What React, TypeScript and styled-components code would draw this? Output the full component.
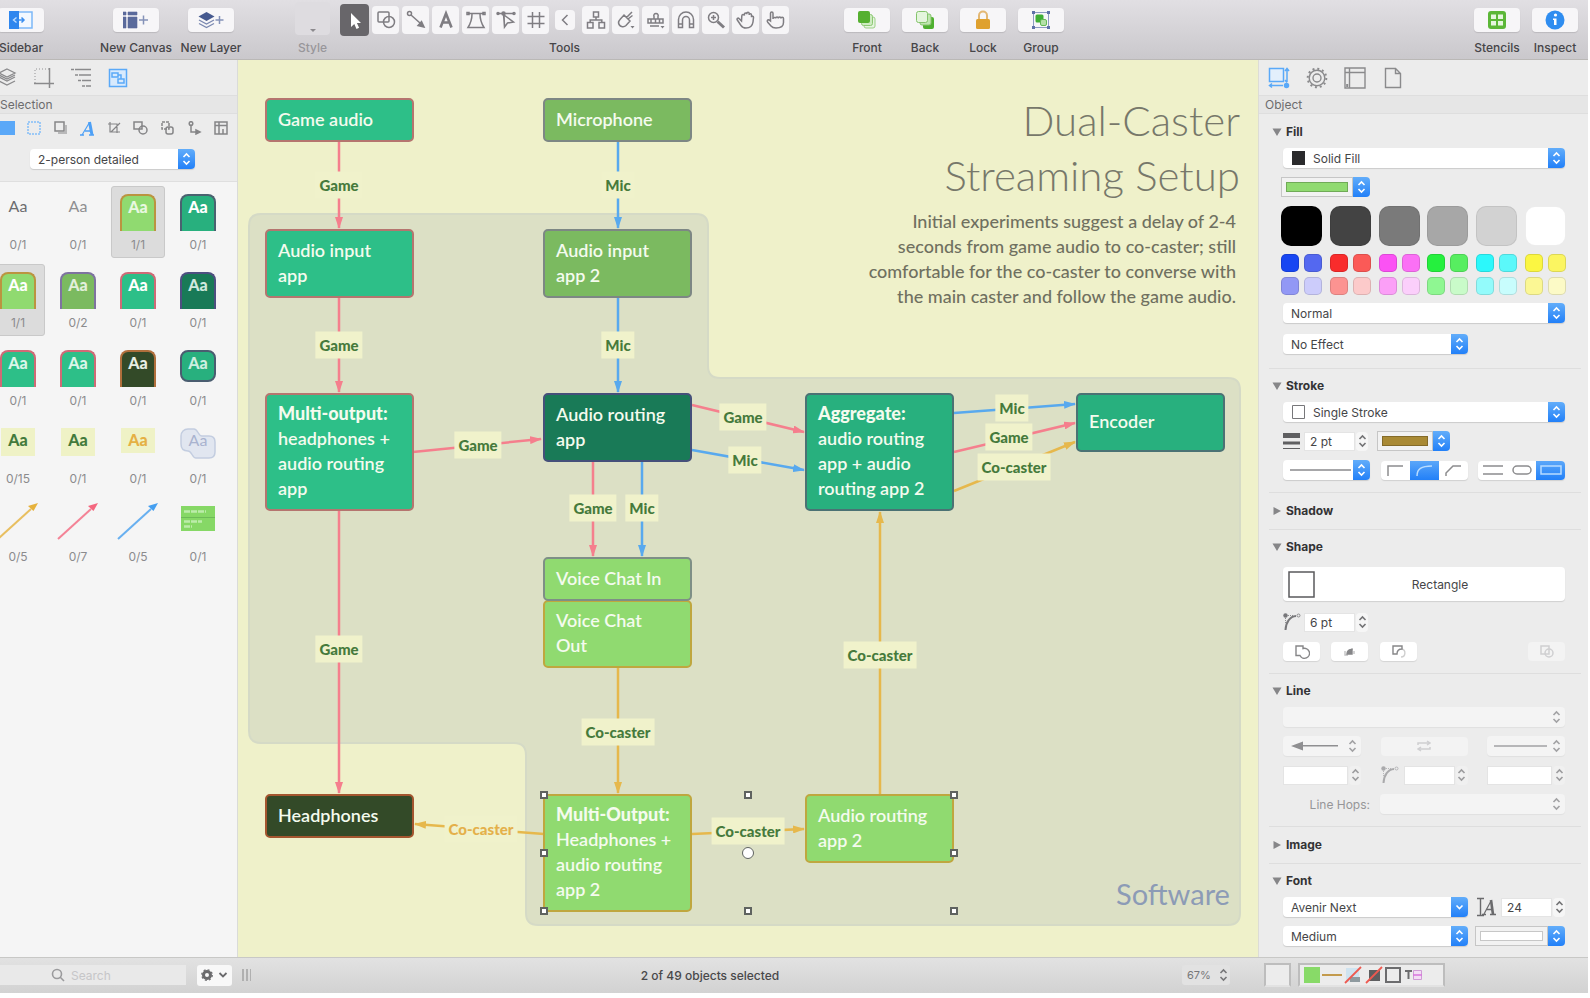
import React from "react";
import styled, { createGlobalStyle, css } from "styled-components";

const UI_FONT = `Inter, "Liberation Sans", sans-serif`;
const DOC_FONT = `Lato, "Open Sans", sans-serif`;

const GlobalStyle = createGlobalStyle`
  * { box-sizing: border-box; }
  body { margin: 0; background: #fff; font-family: ${UI_FONT}; font-size: 12px; color: #3a3a3c; }
  button, input, select { font: inherit; color: inherit; margin: 0; padding: 0; border: 0; border-radius: 0; }
  button { background: none; }
`;

/* ---------- shell ---------- */

const Shell = styled.div`
  display: grid;
  grid-template-rows: 60px minmax(0, 1fr) 36px;
  height: 100vh;
  padding: 0 2px 5px 0;
  overflow: hidden;
`;

const Workspace = styled.main`
  display: grid;
  grid-template-columns: 238px minmax(0, 1fr) 330px;
  min-height: 0;
`;

/* ---------- toolbar ---------- */

const Toolbar = styled.header`
  display: flex;
  align-items: flex-start;
  font-weight: 500;
  background: linear-gradient(#e1dfe3, #cac8cc);
  border-bottom: 1px solid #bab8b6;
  overflow: hidden;
`;

const ToolbarGroup = styled.div<{ $before?: string; $gap?: number }>`
  display: flex;
  gap: ${(p) => p.$gap ?? 12}px;
  margin-left: ${(p) => p.$before ?? "0"};
  padding-top: 8px;
`;

const ToolbarItem = styled.label`
  display: flex;
  flex-direction: column;
  align-items: center;
  width: 46px;
  gap: 8px;
  line-height: 16px;
  white-space: nowrap;
  color: #464548;
`;

const ToolbarButton = styled.button`
  display: grid;
  place-items: center;
  width: 46px;
  height: 24px;
  border-radius: 4px;
  background: #f7f6f8;
  box-shadow: 0 1px 1px rgba(0, 0, 0, 0.12);
`;

const StyleWell = styled.div`
  display: flex;
  flex-direction: column;
  align-items: center;
  width: 35px;
  margin-left: 61px;
  padding-top: 2px;
  gap: 5px;
  line-height: 16px;
  color: #98969a;
`;

const StyleButton = styled.button`
  display: flex;
  align-items: flex-end;
  justify-content: center;
  width: 35px;
  height: 33px;
  padding-bottom: 3px;
  border-radius: 4px;
  background: #dedce0;
`;

const ToolsBlock = styled.div`
  display: flex;
  flex-direction: column;
  align-items: center;
  margin-left: 10px;
  padding-top: 4px;
  gap: 4px;
  line-height: 16px;
  color: #464548;
`;

const ToolStrip = styled.div`
  display: flex;
  align-items: center;
  gap: 3px;
  height: 32px;
`;

const ToolButton = styled.button<{ $active?: boolean; $small?: boolean }>`
  display: grid;
  place-items: center;
  width: 27px;
  height: 28px;
  border-radius: 4px;
  color: #7f7d82;
  background: #f6f5f7;
  ${(p) =>
    p.$active &&
    css`
      width: 29px;
      height: 32px;
      background: #68666a;
      color: #fff;
    `}
  ${(p) =>
    p.$small &&
    css`
      width: 20px;
      height: 20px;
      margin: 0 4px 0 3px;
    `}
`;

/* ---------- side panels ---------- */

const Sidebar = styled.aside`
  display: flex;
  flex-direction: column;
  min-height: 0;
  overflow: hidden;
  background: #f5f5f5;
  border-right: 1px solid #dadbd8;
`;

const TabBar = styled.nav<{ $side: "left" | "right" }>`
  display: flex;
  align-items: center;
  flex: none;
  height: 35px;
  gap: ${(p) => (p.$side === "left" ? 15 : 16)}px;
  padding-left: ${(p) => (p.$side === "left" ? 0 : 9)}px;
  margin-left: ${(p) => (p.$side === "left" ? -4 : 0)}px;
  background: #ececec;
`;

const TabButton = styled.button<{ $active?: boolean }>`
  display: grid;
  place-items: center;
  width: 22px;
  height: 24px;
  color: ${(p) => (p.$active ? "#5aa9f8" : "#8a8a8c")};
`;

const PanelTitle = styled.h2<{ $side: "left" | "right" }>`
  flex: none;
  margin: 0;
  padding-left: ${(p) => (p.$side === "left" ? 0 : 6)}px;
  font-size: 12px;
  font-weight: 400;
  line-height: 17px;
  color: #6c6c6e;
  background: #e6e6e6;
  border-top: 1px solid #dedede;
  border-bottom: 1px solid #dedede;
`;

const FilterPane = styled.div`
  flex: none;
  display: flex;
  flex-direction: column;
  background: #ececec;
  border-bottom: 1px solid #dfdfdf;
  padding: 5px 0 12px;
  gap: 12px;
`;

const FilterRow = styled.div`
  display: flex;
  justify-content: space-between;
  width: 234px;
  margin-left: -3px;
`;

const FilterButton = styled.button`
  display: grid;
  place-items: center;
  width: 20px;
  height: 18px;
  color: #858587;
`;

const FilterSelect = styled.div`
  width: 165px;
  margin-left: 30px;
`;

const StencilGrid = styled.div`
  display: grid;
  grid-template-columns: repeat(4, 54px);
  gap: 6px;
  margin: 4px 0 0 -9px;
`;

const StencilCell = styled.button<{ $selected?: boolean }>`
  display: flex;
  flex-direction: column;
  align-items: center;
  height: 72px;
  padding-top: 7px;
  border: 1px solid ${(p) => (p.$selected ? "#c9c9c9" : "transparent")};
  border-radius: 3px;
  background: ${(p) => (p.$selected ? "#dcdcdc" : "transparent")};
`;

const StencilPreview = styled.span`
  display: flex;
  justify-content: center;
  align-items: flex-start;
  height: 43px;
`;

const StencilCount = styled.span`
  font-size: 12px;
  line-height: 16px;
  color: #8b8b8d;
`;

type ChipKind = "text" | "tab" | "round" | "note" | "shortNote";
const Chip = styled.span<{ $kind: ChipKind; $bg?: string; $edge?: string; $ink: string; $bold?: boolean }>`
  display: block;
  width: 36px;
  height: 37px;
  font-family: ${DOC_FONT};
  font-size: 16px;
  line-height: 24px;
  text-align: center;
  font-weight: ${(p) => (p.$bold ? 900 : 400)};
  color: ${(p) => p.$ink};
  background: ${(p) => p.$bg ?? "none"};
  ${(p) =>
    p.$kind === "tab" &&
    css`
      line-height: 22px;
      border: 2px solid ${p.$edge};
      border-bottom: 0;
      border-radius: 8px 8px 0 0;
    `}
  ${(p) =>
    p.$kind === "round" &&
    css`
      height: 32px;
      line-height: 22px;
      border: 2px solid ${p.$edge};
      border-radius: 8px;
    `}
  ${(p) => p.$kind === "note" && "height: 28px; width: 34px;"}
  ${(p) => p.$kind === "shortNote" && "height: 25px; width: 34px;"}
`;

const BlobChip = styled.span`
  display: grid;
  place-items: center;
  font-family: ${DOC_FONT};
  font-size: 16px;
  line-height: 24px;
  color: #a9b3cf;
  & > * { grid-area: 1 / 1; }
  & > span { align-self: start; }
`;

/* ---------- inspector ---------- */

const Inspector = styled.aside`
  display: flex;
  flex-direction: column;
  min-height: 0;
  overflow: hidden;
  background: #ececec;
  border-left: 1px solid #dcdcd6;
`;

const InspectorBody = styled.div`
  flex: 1;
  min-height: 0;
  overflow: hidden;
  padding: 1px 7px 0 10px;
`;

const Section = styled.section<{ $closed?: boolean }>`
  display: flex;
  flex-direction: column;
  gap: 9px;
  padding: ${(p) => (p.$closed ? "10px 16px 11px 14px" : "9px 16px 12px 14px")};
  border-bottom: 1px solid #dedede;
`;

const SectionToggle = styled.button`
  display: flex;
  align-items: center;
  gap: 4px;
  height: 16px;
  margin: 0 0 -1px -11px;
  font-size: 12px;
  line-height: 16px;
  font-weight: 700;
  color: #333335;
`;

const Row = styled.div<{ $between?: boolean; $tall?: boolean }>`
  display: flex;
  align-items: center;
  height: ${(p) => (p.$tall ? 24 : 20)}px;
  justify-content: ${(p) => (p.$between ? "space-between" : "flex-start")};
`;

const Field = styled.div<{ $w: number; $before?: number }>`
  display: flex;
  align-items: center;
  width: ${(p) => p.$w}px;
  margin-left: ${(p) => p.$before ?? 0}px;
`;

const PopupBox = styled.span<{ $disabled?: boolean }>`
  display: flex;
  align-items: center;
  width: 100%;
  height: 20px;
  border-radius: 4px;
  overflow: hidden;
  color: #454547;
  background: ${(p) => (p.$disabled ? "#f4f4f4" : "#fff")};
  box-shadow: 0 1px 1px rgba(0, 0, 0, ${(p) => (p.$disabled ? 0.05 : 0.14)});
  & > svg { flex: none; }
`;

const NativeSelect = styled.select<{ $bare: boolean }>`
  appearance: none;
  flex: 1;
  width: 0;
  min-width: 0;
  height: 20px;
  padding-left: ${(p) => (p.$bare ? 0 : 8)}px;
  font-size: 12px;
  background: transparent;
  opacity: 1;
`;

const PopupCap = styled.span<{ $plain?: boolean }>`
  flex: none;
  display: grid;
  place-items: center;
  width: 17px;
  height: 20px;
  color: ${(p) => (p.$plain ? "#a2a2a4" : "#fff")};
  background: ${(p) => (p.$plain ? "none" : "linear-gradient(#62adfa, #2280f8)")};
`;

const WellButton = styled.button`
  display: flex;
  align-items: center;
  width: 100%;
  height: 20px;
  border-radius: 0 4px 4px 0;
  overflow: hidden;
`;

const WellFrame = styled.span`
  flex: 1;
  display: grid;
  height: 20px;
  padding: 4px;
  border: 1px solid #c6c6c6;
  background: #f2f2f2;
`;

const WellColor = styled.span<{ $color: string }>`
  background: ${(p) => p.$color};
  border: 1px solid rgba(0, 0, 0, 0.22);
`;

const Palette = styled.div`
  display: grid;
  grid-template-columns: repeat(6, 41px);
  justify-content: space-between;
  row-gap: 8px;
  margin: 0 -1px -1px -2px;
`;

const GreySwatch = styled.button<{ $color: string }>`
  height: 40px;
  border-radius: 10px;
  background: ${(p) => p.$color};
  border: 1px solid rgba(0, 0, 0, 0.07);
`;

const ColorCluster = styled.div`
  display: grid;
  grid-template-columns: 18px 18px;
  gap: 5px;
`;

const SmallSwatch = styled.button<{ $color: string }>`
  height: 18px;
  border-radius: 5px;
  background: ${(p) => p.$color};
  border: 1px solid rgba(0, 0, 0, 0.12);
`;

const NumberInput = styled.input`
  flex: 1;
  min-width: 0;
  height: 19px;
  padding-left: 5px;
  font-size: 12px;
  background: #fff;
  color: #454547;
  border: 1px solid #e4e4e4;
`;

const StepperButton = styled.button`
  display: grid;
  place-items: center;
  width: 12px;
  height: 19px;
  margin-left: 1px;
  border-radius: 4px;
  background: #f6f6f6;
  color: #737375;
  &:disabled { color: #9c9c9e; background: #f0f0f0; }
`;

const Segments = styled.div`
  display: flex;
  width: 87px;
  height: 19px;
  border-radius: 4px;
  overflow: hidden;
  background: #fff;
  box-shadow: 0 1px 1px rgba(0, 0, 0, 0.12);
`;

const SegmentButton = styled.button<{ $active?: boolean }>`
  flex: 1;
  display: grid;
  place-items: center;
  color: ${(p) => (p.$active ? "#b8dcff" : "#8c8c8e")};
  background: ${(p) => (p.$active ? "linear-gradient(#5ba7f9, #2280f8)" : "none")};
`;

const ShapeButton = styled.button`
  display: flex;
  align-items: center;
  height: 34px;
  margin: 4px 0 2px;
  padding-left: 5px;
  border-radius: 4px;
  color: #454547;
  background: #fff;
  box-shadow: 0 1px 1px rgba(0, 0, 0, 0.12);
  & > span { flex: 1; text-align: center; }
`;

const ActionButton = styled.button<{ $before?: string; $w?: number }>`
  display: grid;
  place-items: center;
  width: ${(p) => p.$w ?? 37}px;
  height: 19px;
  margin-left: ${(p) => p.$before ?? "0"};
  border-radius: 4px;
  background: #fff;
  color: #868688;
  box-shadow: 0 1px 1px rgba(0, 0, 0, 0.1);
  &:disabled { background: #f3f3f3; color: #cfcfd1; box-shadow: none; }
`;

const HopsLabel = styled.label`
  flex: 1;
  padding-right: 10px;
  text-align: right;
  color: #969698;
`;

/* ---------- canvas ---------- */

const Canvas = styled.div`
  position: relative;
  overflow: hidden;
  background: #eff1ca;
  font-family: ${DOC_FONT};
`;

const Wiring = styled.svg`
  position: absolute;
  top: 0;
  left: 0;
`;

type Tone = "game" | "mic" | "router" | "mix" | "chat" | "voice" | "phones";
const nodeColors: Record<Tone, [string, string]> = {
  game: ["#2dbf88", "#b5756f"],
  mic: ["#7bba60", "#7d8784"],
  router: ["#197a57", "#45507a"],
  mix: ["#28b07e", "#4b7274"],
  chat: ["#90da70", "#7e8f86"],
  voice: ["#90da70", "#bfa73f"],
  phones: ["#334a28", "#a4562f"],
};

const Node = styled.div<{ $x: number; $y: number; $h: number; $tone: Tone }>`
  position: absolute;
  left: ${(p) => p.$x}px;
  top: ${(p) => p.$y}px;
  width: 149px;
  height: ${(p) => p.$h}px;
  display: flex;
  flex-direction: column;
  justify-content: center;
  padding: 0 0 2px 11px;
  border: 2px solid ${(p) => nodeColors[p.$tone][1]};
  border-radius: 5px;
  background: ${(p) => nodeColors[p.$tone][0]};
  color: #f4fbee;
  font-size: 18px;
  line-height: 25px;
  font-weight: 600;
  white-space: nowrap;
  & strong { font-weight: 900; }
`;

const EdgeLabel = styled.span<{ $x: number; $y: number; $orange?: boolean }>`
  position: absolute;
  left: ${(p) => p.$x}px;
  top: ${(p) => p.$y}px;
  transform: translate(-50%, -50%);
  padding: 0 4px 1px;
  font-size: 15px;
  line-height: 26px;
  font-weight: 900;
  white-space: nowrap;
  color: ${(p) => (p.$orange ? "#e4b04a" : "#467a3c")};
  background: #f0f2cb;
`;

const DocHeading = styled.div`
  position: absolute;
  left: 580px;
  top: 33px;
  width: 422px;
  text-align: right;
  color: #6f7060;
`;

const DocTitle = styled.h1`
  margin: 0;
  font-size: 42px;
  line-height: 55px;
  font-weight: 300;
  color: #77786a;
`;

const DocNote = styled.p`
  margin: 6px 4px 0 0;
  font-size: 18px;
  line-height: 25px;
  font-weight: 500;
`;

const RegionName = styled.span`
  position: absolute;
  left: 878px;
  top: 816px;
  font-size: 29px;
  line-height: 36px;
  color: #8c9bb6;
`;

const Handle = styled.span<{ $x: number; $y: number; $round?: boolean }>`
  position: absolute;
  left: ${(p) => p.$x}px;
  top: ${(p) => p.$y}px;
  width: ${(p) => (p.$round ? 12 : 8)}px;
  height: ${(p) => (p.$round ? 12 : 8)}px;
  transform: translate(-50%, -50%);
  border: ${(p) => (p.$round ? 1 : 2)}px solid #5f6360;
  border-radius: ${(p) => (p.$round ? "50%" : "0")};
  background: #fff;
`;

/* ---------- footer ---------- */

const Footer = styled.footer`
  display: grid;
  grid-template-columns: 238px minmax(0, 1fr) 330px;
  background: linear-gradient(#e2e2e2, #d2d2d2);
  border-top: 1px solid #c8c8c6;
`;

const FooterCell = styled.div`
  display: flex;
  align-items: center;
  height: 34px;
`;

const SearchBox = styled.label`
  display: flex;
  align-items: center;
  gap: 6px;
  width: 186px;
  height: 20px;
  padding-left: 51px;
  background: #e9e9e9;
  color: #9b9b9d;
`;

const SearchInput = styled.input`
  width: 100px;
  background: none;
  font-size: 12px;
  &::placeholder { color: #c6c6c8; opacity: 1; }
`;

const GearButton = styled.button`
  display: flex;
  align-items: center;
  justify-content: center;
  gap: 5px;
  width: 35px;
  height: 21px;
  margin-left: 11px;
  border-radius: 3px;
  background: #f8f8f8;
  color: #6a6a6c;
`;

const DragHandle = styled.span`
  width: 9px;
  height: 12px;
  margin-left: 4px;
  background: repeating-linear-gradient(90deg, #b0b0b0 0 2px, transparent 2px 4px);
`;

const StatusText = styled.span`
  flex: 1;
  padding-right: 13px;
  text-align: center;
  font-weight: 500;
  color: #48484a;
`;

const ZoomField = styled.div`
  display: flex;
  align-items: center;
  width: 48px;
  height: 20px;
  margin-right: 28px;
  padding: 0 2px 0 5px;
  border-radius: 3px;
  background: #e2e2e2;
  color: #777779;
`;

const ZoomSelect = styled.select`
  appearance: none;
  flex: 1;
  min-width: 0;
  background: none;
  font-size: 11px;
`;

const StyleTray = styled.div<{ $w: number; $before: number }>`
  display: flex;
  align-items: center;
  gap: 3px;
  width: ${(p) => p.$w}px;
  height: 24px;
  margin-left: ${(p) => p.$before}px;
  padding-left: 4px;
  border: 2px solid #bdbdbd;
  border-bottom-color: #e2e2e2;
  background: #ececec;
`;

/* ---------- icon helpers ---------- */

const Icon = ({ w = 20, h = 20, sw = 1.5, children }: { w?: number; h?: number; sw?: number; children: React.ReactNode }) => (
  <svg width={w} height={h} viewBox={`0 0 ${w} ${h}`} fill="none" stroke="currentColor" strokeWidth={sw} aria-hidden="true">
    {children}
  </svg>
);

const UpDown = () => (
  <Icon w={9} h={14} sw={1.6}>
    <path d="M1.5 5 4.5 2l3 3M1.5 9l3 3 3-3" />
  </Icon>
);

const Caret = ({ open }: { open?: boolean }) => (
  <svg width="10" height="10" viewBox="0 0 10 10" fill="#868688" aria-hidden="true">
    {open ? <path d="M.5 1.5h9L5 9z" /> : <path d="M1.5 1v8L9 5z" />}
  </svg>
);

const RadiusIcon = ({ color = "#77777a" }: { color?: string }) => (
  <svg width="18" height="18" viewBox="0 0 18 18" fill="none" stroke={color} aria-hidden="true">
    <path d="M2.500 17C3 9 7 3.500 13 3" strokeWidth="2" />
    <circle cx="2.500" cy="2.500" r="2.200" fill={color} stroke="none" />
    <path d="M2.500 5v6M5 2.500h6" strokeWidth=".8" strokeDasharray="1 1" />
    <circle cx="15.500" cy="2.500" r="1.500" strokeWidth=".8" />
  </svg>
);

/* ---------- controls ---------- */

const Popup = ({ name, value, lead, disabled, down }: { name: string; value?: string; lead?: React.ReactNode; disabled?: boolean; down?: boolean }) => (
  <PopupBox $disabled={disabled}>
    {lead}
    <NativeSelect aria-label={name} disabled={disabled} $bare={!value}>
      <option>{value ?? ""}</option>
    </NativeSelect>
    <PopupCap $plain={disabled}>
      {down ? <Icon w={9} h={14} sw={1.6}><path d="m1.500 5.500 3 3 3-3" /></Icon> : <UpDown />}
    </PopupCap>
  </PopupBox>
);

const Well = ({ name, color }: { name: string; color: string }) => (
  <WellButton aria-label={name}>
    <WellFrame><WellColor $color={color} /></WellFrame>
    <PopupCap><UpDown /></PopupCap>
  </WellButton>
);

const NumberField = ({ name, value = "", disabled }: { name: string; value?: string; disabled?: boolean }) => (
  <>
    <NumberInput aria-label={name} defaultValue={value} disabled={disabled} />
    <StepperButton aria-label={`${name} stepper`} disabled={disabled}><UpDown /></StepperButton>
  </>
);

const Heading = ({ title, open }: { title: string; open?: boolean }) => (
  <SectionToggle aria-expanded={!!open}>
    <Caret open={open} />
    {title}
  </SectionToggle>
);

/* ---------- toolbar content ---------- */

const tools: { name: string; icon: React.ReactNode; active?: boolean; small?: boolean }[] = [
  { name: "Selection", active: true, icon: <Icon><path d="M6 3v14l3.300-3 2.200 5 2.600-1.200-2.200-4.800H16z" fill="#fff" stroke="none" /></Icon> },
  { name: "Shape", icon: <Icon><rect x="2" y="2" width="11" height="10" rx="1" /><circle cx="13" cy="12" r="5.500" /></Icon> },
  { name: "Line", icon: <Icon><circle cx="3.500" cy="3.500" r="2" /><path d="m5 5 9 8" /><path d="m18 17-6-1.500 3.500-4z" fill="currentColor" /></Icon> },
  { name: "Text", icon: <Icon sw={2.6}><path d="M4.500 17.500 10 3.500l5.500 14M6.500 12.500h7" /></Icon> },
  { name: "Pen", icon: <Icon><path d="M2 3.500h16M6 4c0 6-1.500 9.500-4 13.500h16C15.500 13.500 14 10 14 4" /><rect x="1" y="2.500" width="2" height="2" /><rect x="17" y="2.500" width="2" height="2" /></Icon> },
  { name: "Point Editor", icon: <Icon><path d="M1 3.500h17M7.500 4l1 13M8 5l9.500 7-6 1-3 4z" /><circle cx="7.500" cy="3.500" r="1.500" fill="currentColor" /><circle cx="2" cy="3.500" r="1" /><circle cx="18" cy="3.500" r="1" /></Icon> },
  { name: "Artboard", icon: <Icon><path d="M6.500 2v16M13.500 2v16M1.500 6.500h17M1.500 13.500h17" /></Icon> },
  { name: "More tools", small: true, icon: <Icon w={12} h={14}><path d="M8.500 2 3.500 7l5 5" /></Icon> },
  { name: "Diagram", icon: <Icon><rect x="7.500" y="2" width="5" height="5" /><rect x="1.500" y="12.500" width="5.500" height="5.500" /><rect x="13" y="12.500" width="5.500" height="5.500" /><path d="M10 7v3M4.200 12.500V10h11.600v2.500" /></Icon> },
  { name: "Style Brush", icon: <Icon><path d="m8 5 6 6-4 4.500c-2 2-5.500 1.500-7-1-1-2 0-4 1-5zM10.500 7.500 16 2M12 9l4.500-3.500" /><path d="M14.500 16h4l-2 2.500z" fill="currentColor" stroke="none" /></Icon> },
  { name: "Rubber Stamp", icon: <Icon><path d="M8 9V6.500a2.200 2.200 0 1 1 4 0V9M2 9h15v4H2zM5 9v4M9.500 9v4M13.500 9v4M4 16h9" /><path d="M14.500 16h4l-2 2.500z" fill="currentColor" stroke="none" /></Icon> },
  { name: "Magnet", icon: <Icon><path d="M2.500 17.500V9.500a7.500 7.500 0 0 1 15 0v8h-4V10a3.500 3.500 0 0 0-7 0v7.500zM2.500 14h4M13.500 14h4" /></Icon> },
  { name: "Zoom", icon: <Icon><circle cx="7.500" cy="7.500" r="5" /><path d="M7.500 5v5M5 7.500h5" /><path d="m11.500 11.500 6.500 6" strokeWidth="3" /></Icon> },
  { name: "Hand", icon: <Icon><path d="M5.500 11 3 8.500c-1-1-2.500.3-1.700 1.500L5 15.500c1 1.500 2.500 2.500 5 2.500 4.500 0 6.500-2.500 7-6l.5-4.500c.1-1.600-1.800-1.800-2-.3V5c0-1.700-2.300-1.700-2.300 0V3.500c0-1.700-2.400-1.700-2.400 0V4.200c0-1.700-2.400-1.700-2.400 0V5.500C8 4 5.800 4.200 5.800 6z" /></Icon> },
  { name: "Browse", icon: <Icon><path d="M7 9V3.300C7 1.500 4.500 1.500 4.500 3.300V11L3 10c-1.500-.5-2.300 1-1.300 2.200L5 16c1 1.300 2.500 2 5 2 4.500 0 7.500-1.500 7.500-5.500V8.500c0-1.800-2.600-1.800-2.600 0 0-2-2.600-2-2.600 0C12.300 6.500 9.700 6.500 9.700 8.500 9.500 7 7 7 7 9z" /></Icon> },
];

const BigItem = ({ label, children }: { label: string; children: React.ReactNode }) => (
  <ToolbarItem>
    <ToolbarButton aria-label={label}>{children}</ToolbarButton>
    {label}
  </ToolbarItem>
);

const TopBar = () => (
  <Toolbar>
    <ToolbarGroup $before="-2px" $gap={29}>
      <BigItem label="Sidebar">
        <svg width="24" height="18" viewBox="0 0 24 18" fill="none" aria-hidden="true">
          <rect x="1" y="1" width="22" height="16" stroke="#7db8f7" strokeWidth="1.500" fill="#f2f8ff" />
          <path d="M0 0h10v18H0z" fill="#2f86ee" />
          <path d="M10 9h5M12.500 6.500 15 9l-2.500 2.500" stroke="#3b8ff0" strokeWidth="1.500" />
          <path d="M7.500 6.500 4.500 9l3 2.500" stroke="#bcdcff" strokeWidth="1.400" />
        </svg>
      </BigItem>
    </ToolbarGroup>
    <ToolbarGroup $before="69px" $gap={29}>
      <BigItem label="New Canvas">
        <svg width="26" height="18" viewBox="0 0 26 18" fill="none" aria-hidden="true">
          <path d="M0 1h3v3H0zM5 1h9v3H5zM0 6h3v11H0zM5 6h9v11H5z" fill="#5a6a9c" stroke="#5a6a9c" strokeWidth=".6" />
          <path d="M20.500 4.500v9M16 9h9" stroke="#8592b8" strokeWidth="1.500" />
        </svg>
      </BigItem>
      <BigItem label="New Layer">
        <svg width="26" height="18" viewBox="0 0 26 18" fill="none" aria-hidden="true">
          <path d="m8.500 1 8 4.500-8 4.500-8-4.500z" fill="#46598f" />
          <path d="m1 9 7.500 4L16 9M1 12.500l7.500 4 7.500-4" stroke="#7a88b0" strokeWidth="1.300" />
          <path d="M21.500 5v8M17.500 9h8" stroke="#8592b8" strokeWidth="1.500" />
        </svg>
      </BigItem>
    </ToolbarGroup>
    <StyleWell>
      <StyleButton aria-label="Style">
        <svg width="6" height="3" viewBox="0 0 6 3" fill="#8c8a8e" aria-hidden="true"><path d="M0 0h6L3 3z" /></svg>
      </StyleButton>
      Style
    </StyleWell>
    <ToolsBlock>
      <ToolStrip>
        {tools.map((t) => (
          <ToolButton key={t.name} aria-label={t.name} $active={t.active} $small={t.small}>{t.icon}</ToolButton>
        ))}
      </ToolStrip>
      Tools
    </ToolsBlock>
    <ToolbarGroup $before="55px">
      <BigItem label="Front">
        <svg width="20" height="20" viewBox="0 0 20 20" aria-hidden="true">
          <rect x="7" y="7" width="11" height="11" rx="2" fill="#e6f5df" stroke="#9bcf85" />
          <rect x="4.500" y="4.500" width="11" height="11" rx="2" fill="#cdebc0" stroke="#8cc873" />
          <rect x="1" y="1" width="12" height="12" rx="2" fill="#55b030" />
        </svg>
      </BigItem>
      <BigItem label="Back">
        <svg width="20" height="20" viewBox="0 0 20 20" aria-hidden="true">
          <rect x="8" y="7" width="11" height="12" rx="2" fill="#4eb02f" />
          <rect x="5" y="4" width="11" height="11" rx="2" fill="#bfe6b0" stroke="#84c46b" />
          <rect x="1.500" y="1.500" width="11" height="11" rx="2" fill="#e4f5dd" stroke="#84c46b" />
        </svg>
      </BigItem>
      <BigItem label="Lock">
        <svg width="16" height="20" viewBox="0 0 16 20" fill="none" aria-hidden="true">
          <path d="M4 10V5.500a4 4 0 0 1 8 0V10" stroke="#e3b874" strokeWidth="2" />
          <rect x="1" y="9" width="14" height="10" rx="1.500" fill="#dfa12f" />
        </svg>
      </BigItem>
      <BigItem label="Group">
        <svg width="20" height="20" viewBox="0 0 20 20" fill="none" aria-hidden="true">
          <path d="M2.500 2.500h15v15h-15z" stroke="#8d9bc2" />
          <path d="M1 1h3v3H1zM16 1h3v3h-3zM1 16h3v3H1zM16 16h3v3h-3z" fill="#5f71a8" />
          <rect x="4.500" y="4.500" width="8" height="8" rx="1.500" fill="#3fae35" />
          <rect x="9.500" y="9.500" width="6" height="6" rx="1.500" fill="#b4e0a8" stroke="#63b856" />
        </svg>
      </BigItem>
    </ToolbarGroup>
    <ToolbarGroup $before="auto">
      <BigItem label="Stencils">
        <svg width="20" height="20" viewBox="0 0 20 20" aria-hidden="true">
          <rect x="1" y="1" width="18" height="18" rx="3" fill="#5cb738" />
          <path d="M4 4.500h5V9H4zM11 4.500h5V9h-5zM4 11h5v4.500H4zM11 11h5v4.500h-5z" fill="#e6f6df" />
        </svg>
      </BigItem>
      <BigItem label="Inspect">
        <svg width="20" height="20" viewBox="0 0 20 20" aria-hidden="true">
          <circle cx="10" cy="10" r="9.500" fill="#2f8df0" />
          <circle cx="10.500" cy="5" r="1.600" fill="#fff" />
          <path d="M8 8.500h3.500V15H9V10H8z" fill="#fff" />
        </svg>
      </BigItem>
    </ToolbarGroup>
    <ToolbarGroup $before="10px" />
  </Toolbar>
);

/* ---------- left sidebar content ---------- */

const filters: { name: string; icon: React.ReactNode }[] = [
  { name: "Fill", icon: <svg width="16" height="14" viewBox="0 0 16 14" aria-hidden="true"><path d="M0 0h16v14H0z" fill="#5aa8f8" /></svg> },
  { name: "Stroke", icon: <svg width="14" height="14" viewBox="0 0 14 14" fill="none" aria-hidden="true"><path d="M1 1h12v12H1z" stroke="#83bdf8" strokeWidth="1.500" strokeDasharray="2 1" /></svg> },
  { name: "Shadow", icon: <Icon w={14} h={14}><path d="M1 1h9v9H1z" /><path d="M12 4v8H4" strokeWidth="2" opacity=".5" /></Icon> },
  { name: "Text", icon: <svg width="15" height="15" viewBox="0 0 15 15" fill="none" stroke="#4da0f6" aria-hidden="true"><path d="M2 14 9.500 1.500" strokeWidth="1.200" /><path d="M9.500 1 12 14" strokeWidth="3" /><path d="M5 10h6M0 14h4M9 14h5" strokeWidth="1.300" /></svg> },
  { name: "Crop", icon: <Icon w={14} h={14}><path d="M1 3h9v9M3 1v10h10M4 11l9-9" strokeWidth="1.200" /></Icon> },
  { name: "Shape", icon: <Icon w={15} h={14}><path d="M1 1h8v7H1z" /><circle cx="10" cy="9" r="4" /></Icon> },
  { name: "Group", icon: <Icon w={15} h={14}><path d="M2 1h7v7H2z" strokeDasharray="3 1" /><rect x="6" y="6" width="7" height="7" rx="2" /></Icon> },
  { name: "Connection", icon: <Icon w={15} h={14}><circle cx="4" cy="2.500" r="1.800" /><path d="M4 4v7h6" /><path d="M9 9l4 2-4 2z" fill="currentColor" /></Icon> },
  { name: "Grid", icon: <Icon w={14} h={14}><path d="M1 1h12v12H1zM1 4.500h12M5 1v12M9 8v5" /></Icon> },
];

const Arrow = ({ color }: { color: string }) => (
  <svg width="42" height="38" viewBox="0 4 42 38" overflow="visible" aria-hidden="true">
    <path d="M1 37 34 7" stroke={color} strokeWidth="2" opacity=".8" />
    <path d="M41 1 36.500 9 31 4z" fill={color} />
  </svg>
);

const chip = ($kind: ChipKind, $ink: string, $bg?: string, $edge?: string, $bold?: boolean) => (
  <Chip $kind={$kind} $ink={$ink} $bg={$bg} $edge={$edge} $bold={$bold}>Aa</Chip>
);

const stencils: { count: string; selected?: boolean; art: React.ReactNode }[] = [
  { count: "0/1", art: chip("text", "#6d6d6f") },
  { count: "0/1", art: chip("text", "#8f8f91") },
  { count: "1/1", selected: true, art: chip("tab", "#e9f8e0", "#90da70", "#bb9440", true) },
  { count: "0/1", art: chip("tab", "#fff", "#28b07e", "#4a6270", true) },
  { count: "1/1", selected: true, art: chip("tab", "#fff", "#90da70", "#bb9440", true) },
  { count: "0/2", art: chip("tab", "#e2efdb", "#7bba60", "#7e73a0", true) },
  { count: "0/1", art: chip("tab", "#fff", "#2dbf88", "#cf6a76", true) },
  { count: "0/1", art: chip("tab", "#cfe8dd", "#197a57", "#4d4f80", true) },
  { count: "0/1", art: chip("tab", "#daf5e9", "#2dbf88", "#cf6a76", true) },
  { count: "0/1", art: chip("tab", "#daf5e9", "#2dbf88", "#cf6a76", true) },
  { count: "0/1", art: chip("tab", "#e8ede3", "#334a28", "#b06f3c", true) },
  { count: "0/1", art: chip("round", "#cdeee0", "#28b07e", "#4a5d70", true) },
  { count: "0/15", art: chip("note", "#437a3c", "#eff2c6", undefined, true) },
  { count: "0/1", art: chip("note", "#437a3c", "#eff2c6", undefined, true) },
  { count: "0/1", art: chip("shortNote", "#e5b044", "#eff2c6", undefined, true) },
  {
    count: "0/1",
    art: (
      <BlobChip>
        <svg width="36" height="32" viewBox="0 0 36 32" aria-hidden="true">
          <path d="M8 1h6c4 0 4 7 8 7h7c4 0 6 2 6 6v10c0 4-2 6-6 6H16c-4 0-4-7-8-7-4 0-7-2-7-7V8c0-4 3-7 7-7z" fill="#e1e6f0" stroke="#c3cde0" strokeWidth="1.500" />
        </svg>
        <span>Aa</span>
      </BlobChip>
    ),
  },
  { count: "0/5", art: <Arrow color="#e6b23c" /> },
  { count: "0/7", art: <Arrow color="#f4677f" /> },
  { count: "0/5", art: <Arrow color="#459ff0" /> },
  {
    count: "0/1",
    art: (
      <svg width="36" height="34" viewBox="0 0 36 34" aria-hidden="true">
        <path d="M1 0h34v25H1z" fill="#86d866" />
        <path d="M1 11.500h34" stroke="#6dbb58" />
        <path d="M4 5.500h22M4 15.500h18M4 20.500h8" stroke="#bcecaa" strokeWidth="2.500" strokeDasharray="6 1" />
      </svg>
    ),
  },
];

const LeftPanel = () => (
  <Sidebar>
    <TabBar $side="left">
      <TabButton aria-label="Layers"><Icon w={20} h={20} sw={1.3}><path d="m10 1 8 4-8 4-8-4zM2 9l8 4 8-4M2 13l8 4 8-4M2 7l8 4 8-4" /></Icon></TabButton>
      <TabButton aria-label="Guides"><Icon w={20} h={20}><path d="M15.500 0v20M0 15.500h20" /><path d="M1 15V1h14" strokeDasharray="1 2" opacity=".6" /></Icon></TabButton>
      <TabButton aria-label="Outline"><Icon w={22} h={22}><path d="M1 2.500h20M5 8h16M8 13.500h13M12 19h9" strokeDasharray="3 1 20" /></Icon></TabButton>
      <TabButton aria-label="Selection" $active><Icon w={20} h={20}><path d="M1.500 1.500h17v17h-17z" fill="#d8eafd" /><path d="M4 5h6v4H4zM10 11h6v4h-6zM10 7h3v4" /></Icon></TabButton>
    </TabBar>
    <PanelTitle $side="left">Selection</PanelTitle>
    <FilterPane>
      <FilterRow>
        {filters.map((f) => <FilterButton key={f.name} aria-label={f.name}>{f.icon}</FilterButton>)}
      </FilterRow>
      <FilterSelect><Popup name="Selection set" value="2-person detailed" /></FilterSelect>
    </FilterPane>
    <StencilGrid>
      {stencils.map((s, i) => (
        <StencilCell key={i} $selected={s.selected}>
          <StencilPreview>{s.art}</StencilPreview>
          <StencilCount>{s.count}</StencilCount>
        </StencilCell>
      ))}
    </StencilGrid>
  </Sidebar>
);

/* ---------- diagram ---------- */

const PINK = "#f57f8d";
const BLUE = "#58a9ee";
const GOLD = "#e6b84c";

const edges: [number, number, number, number, string][] = [
  [101, 82, 101, 168, PINK],
  [380, 82, 380, 168, BLUE],
  [101, 238, 101, 332, PINK],
  [380, 238, 380, 332, BLUE],
  [175, 392, 303, 379, PINK],
  [454, 345, 566, 372, PINK],
  [454, 390, 566, 410, BLUE],
  [355, 401, 355, 496, PINK],
  [404, 401, 404, 496, BLUE],
  [716, 353, 837, 344, BLUE],
  [716, 392, 837, 363, PINK],
  [716, 431, 837, 382, GOLD],
  [380, 607, 380, 733, GOLD],
  [101, 450, 101, 733, PINK],
  [642, 734, 642, 452, GOLD],
  [306, 774, 177, 764, GOLD],
  [454, 774, 566, 769, GOLD],
];

const labels: [number, number, string, boolean?][] = [
  [101, 125, "Game"],
  [380, 125, "Mic"],
  [101, 285, "Game"],
  [380, 285, "Mic"],
  [240, 385, "Game"],
  [505, 357, "Game"],
  [507, 400, "Mic"],
  [355, 448, "Game"],
  [404, 448, "Mic"],
  [774, 348, "Mic"],
  [771, 377, "Game"],
  [776, 407, "Co-caster"],
  [642, 595, "Co-caster"],
  [101, 589, "Game"],
  [380, 672, "Co-caster"],
  [243, 769, "Co-caster", true],
  [510, 771, "Co-caster"],
];

const nodes: { x: number; y: number; h: number; tone: Tone; title?: string; lines: string[] }[] = [
  { x: 27, y: 38, h: 44, tone: "game", lines: ["Game audio"] },
  { x: 305, y: 38, h: 44, tone: "mic", lines: ["Microphone"] },
  { x: 27, y: 169, h: 69, tone: "game", lines: ["Audio input", "app"] },
  { x: 305, y: 169, h: 69, tone: "mic", lines: ["Audio input", "app 2"] },
  { x: 27, y: 333, h: 118, tone: "game", title: "Multi-output:", lines: ["headphones +", "audio routing", "app"] },
  { x: 305, y: 333, h: 69, tone: "router", lines: ["Audio routing", "app"] },
  { x: 567, y: 333, h: 118, tone: "mix", title: "Aggregate:", lines: ["audio routing", "app + audio", "routing app 2"] },
  { x: 838, y: 333, h: 59, tone: "mix", lines: ["Encoder"] },
  { x: 305, y: 540, h: 68, tone: "voice", lines: ["Voice Chat", "Out"] },
  { x: 305, y: 497, h: 44, tone: "chat", lines: ["Voice Chat In"] },
  { x: 27, y: 734, h: 44, tone: "phones", lines: ["Headphones"] },
  { x: 305, y: 734, h: 118, tone: "voice", title: "Multi-Output:", lines: ["Headphones +", "audio routing", "app 2"] },
  { x: 567, y: 734, h: 69, tone: "voice", lines: ["Audio routing", "app 2"] },
];

const handles: [number, number][] = [
  [306, 735], [510, 735], [716, 735], [306, 793], [716, 793], [306, 851], [510, 851], [716, 851],
];

const Diagram = () => (
  <Canvas>
    <Wiring width="1020" height="898" viewBox="0 0 1020 898" fill="none" aria-hidden="true">
      <defs>
        {[PINK, BLUE, GOLD].map((c) => (
          <marker key={c} id={`tip${c.slice(1)}`} markerUnits="userSpaceOnUse" markerWidth="12" markerHeight="8" refX="11" refY="4" orient="auto">
            <path d="M0 0 12 4 0 8z" fill={c} />
          </marker>
        ))}
      </defs>
      <path
        d="M23 154H458Q470 154 470 166V306Q470 318 482 318H990Q1002 318 1002 330V853Q1002 865 990 865H300Q288 865 288 853V695Q288 683 276 683H23Q11 683 11 671V166Q11 154 23 154Z"
        fill="#dce0c5"
        stroke="#d5dac6"
        strokeWidth="2"
      />
      {edges.map(([x1, y1, x2, y2, c], i) => (
        <line key={i} x1={x1} y1={y1} x2={x2} y2={y2} stroke={c} strokeWidth="2.500" markerEnd={`url(#tip${c.slice(1)})`} />
      ))}
    </Wiring>
    {labels.map(([x, y, text, orange], i) => (
      <EdgeLabel key={i} $x={x} $y={y} $orange={orange}>{text}</EdgeLabel>
    ))}
    {nodes.map((n, i) => (
      <Node key={i} $x={n.x} $y={n.y} $h={n.h} $tone={n.tone}>
        {n.title && <strong>{n.title}</strong>}
        {n.lines.map((l) => <span key={l}>{l}</span>)}
      </Node>
    ))}
    <DocHeading>
      <DocTitle>Dual-Caster<br />Streaming Setup</DocTitle>
      <DocNote>
        Initial experiments suggest a delay of 2-4<br />
        seconds from game audio to co-caster; still<br />
        comfortable for the co-caster to converse with<br />
        the main caster and follow the game audio.
      </DocNote>
    </DocHeading>
    <RegionName>Software</RegionName>
    {handles.map(([x, y]) => <Handle key={`${x}-${y}`} $x={x} $y={y} />)}
    <Handle $x={510} $y={793} $round />
  </Canvas>
);

/* ---------- inspector content ---------- */

const greys = ["#000000", "#434343", "#7a7a7a", "#a7a7a7", "#d2d2d2", "#ffffff"];
const clusters = [
  ["#1746f2", "#5468f0", "#9298f5", "#ccccfb"],
  ["#f92c2c", "#fb5a57", "#fc9391", "#fccaca"],
  ["#fb52f4", "#fb70f5", "#fb9ff7", "#fbcffb"],
  ["#25f03e", "#57ee60", "#8ff792", "#c9fbc9"],
  ["#2cf8fb", "#5bf8fa", "#93fbfb", "#c8fdfd"],
  ["#fbf642", "#fbf561", "#fbf794", "#fcfac6"],
];

const RightPanel = () => (
  <Inspector>
    <TabBar $side="right">
      <TabButton aria-label="Object" $active><Icon w={22} h={22}><path d="M1.500 1.500h14v13h-14z" fill="#e3effc" /><path d="M19 2v13M17 4l2-2.500L21 4M17 13l2 2.500M2 18.500h13M4 16.500 1.500 18.500 4 20.500" /><circle cx="18.500" cy="18.500" r="2" fill="currentColor" /></Icon></TabButton>
      <TabButton aria-label="Properties"><Icon w={22} h={22} sw={1.4}><circle cx="11" cy="11" r="7.800" /><circle cx="11" cy="11" r="4" /><circle cx="11" cy="11" r="9.300" strokeDasharray="2 2.870" strokeWidth="2" /></Icon></TabButton>
      <TabButton aria-label="Canvas"><Icon w={22} h={22} sw={1.4}><path d="M1 1h20v20H1zM1 5.500h20M5.500 1v20" /><path d="M3.200 17v3" strokeWidth="2" /></Icon></TabButton>
      <TabButton aria-label="Document"><Icon w={18} h={22} sw={1.4}><path d="M1.500 1.500h10l5 5V20.500h-15zM11.500 1.500v5h5" /></Icon></TabButton>
    </TabBar>
    <PanelTitle $side="right">Object</PanelTitle>
    <InspectorBody>
      <Section>
        <Heading title="Fill" open />
        <Popup name="Fill type" value="Solid Fill" lead={<svg width="22" height="14" viewBox="0 0 22 14" aria-hidden="true"><path d="M9 0h13v14H9z" fill="#2a2a2c" /></svg>} />
        <Row><Field $w={89} $before={-2}><Well name="Fill color" color="#90da70" /></Field></Row>
        <Palette>
          {greys.map((g) => <GreySwatch key={g} $color={g} aria-label={g} />)}
          {clusters.map((c) => (
            <ColorCluster key={c[0]}>
              {c.map((s) => <SmallSwatch key={s} $color={s} aria-label={s} />)}
            </ColorCluster>
          ))}
        </Palette>
        <Popup name="Blend mode" value="Normal" />
        <Row $tall><Field $w={185}><Popup name="Effect" value="No Effect" /></Field></Row>
      </Section>
      <Section>
        <Heading title="Stroke" open />
        <Popup name="Stroke type" value="Single Stroke" lead={<svg width="22" height="14" viewBox="0 0 22 14" fill="none" aria-hidden="true"><path d="M9.500.5h12v13h-12z" stroke="#77777a" /></svg>} />
        <Row>
          <svg width="17" height="18" viewBox="0 0 17 18" aria-hidden="true"><path d="M0 1h17v5H0zM0 9.500h17v3H0zM0 16h17v1H0z" fill="#5f5f61" /></svg>
          <Field $w={64} $before={4}><NumberField name="Stroke width" value="2 pt" /></Field>
          <Field $w={73} $before={9}><Well name="Stroke color" color="#a98a35" /></Field>
        </Row>
        <Row $between>
          <Field $w={87}>
            <Popup name="Dash pattern" lead={<svg width="68" height="4" viewBox="0 0 68 4" aria-hidden="true"><path d="M7 2h61" stroke="#8a8a8c" strokeWidth="1.500" /></svg>} />
          </Field>
          <Segments>
            <SegmentButton aria-label="Miter corner"><Icon w={18} h={13}><path d="M2 12V2h15" /></Icon></SegmentButton>
            <SegmentButton aria-label="Round corner" $active><Icon w={18} h={13}><path d="M2 12C2 5 6 2 17 2" /></Icon></SegmentButton>
            <SegmentButton aria-label="Bevel corner"><Icon w={18} h={13}><path d="M2 12V9l7-7h8" /></Icon></SegmentButton>
          </Segments>
          <Segments>
            <SegmentButton aria-label="Butt cap"><Icon w={20} h={12}><path d="M0 2h20M0 10h20" /></Icon></SegmentButton>
            <SegmentButton aria-label="Round cap"><Icon w={20} h={12}><rect x="1" y="2" width="18" height="8" rx="4" /></Icon></SegmentButton>
            <SegmentButton aria-label="Square cap" $active><Icon w={22} h={12}><rect x="1" y="2" width="20" height="8" /></Icon></SegmentButton>
          </Segments>
        </Row>
      </Section>
      <Section $closed><Heading title="Shadow" /></Section>
      <Section>
        <Heading title="Shape" open />
        <ShapeButton>
          <svg width="27" height="27" viewBox="0 0 27 27" fill="none" aria-hidden="true"><path d="M1 1h25v25H1z" stroke="#5a5a5c" strokeWidth="1.500" /></svg>
          <span>Rectangle</span>
        </ShapeButton>
        <Row>
          <RadiusIcon />
          <Field $w={64} $before={3}><NumberField name="Corner radius" value="6 pt" /></Field>
        </Row>
        <Row>
          <ActionButton aria-label="Union"><Icon w={16} h={15} sw={1.4}><path d="M2 2h7v2.500a5 5 0 1 1-3 7H2z" /></Icon></ActionButton>
          <ActionButton aria-label="Intersect" $before="11px"><Icon w={16} h={15} sw={1.4}><path d="M5 10c0-3 2-4.500 5-4.500V10z" fill="currentColor" /><path d="M3 7v4h3M10 4v2M12 7v3" opacity=".5" /></Icon></ActionButton>
          <ActionButton aria-label="Subtract" $before="12px"><Icon w={16} h={15} sw={1.4}><path d="M2 2h9v3c-3 0-5 2-5 5H2z" /><path d="M11 5c4 1 4 8-1 8" opacity=".4" /></Icon></ActionButton>
          <ActionButton aria-label="Make points editable" $before="auto" disabled><Icon w={16} h={15}><path d="M2 2h8v8H2z" /><circle cx="10" cy="9" r="4" /></Icon></ActionButton>
        </Row>
      </Section>
      <Section>
        <Heading title="Line" open />
        <Popup name="Line type" disabled />
        <Row $between>
          <Field $w={78}>
            <Popup name="Line start" disabled lead={<svg width="56" height="10" viewBox="0 0 56 10" aria-hidden="true"><path d="M8 5 20 .5v9zM18 4h37v1.500H18z" fill="#8f8f91" /></svg>} />
          </Field>
          <ActionButton aria-label="Reverse" $w={87} disabled><Icon w={14} h={12}><path d="M1 5V3h11M10 1l3 2-3 2M13 7v2H2M4 7 1 9l3 2" /></Icon></ActionButton>
          <Field $w={78}>
            <Popup name="Line end" disabled lead={<svg width="60" height="4" viewBox="0 0 60 4" aria-hidden="true"><path d="M7 2h53" stroke="#a2a2a4" strokeWidth="1.500" /></svg>} />
          </Field>
        </Row>
        <Row $between>
          <Field $w={78}><NumberField name="Start scale" disabled /></Field>
          <Field $w={87}>
            <RadiusIcon color="#aaaaac" />
            <Field $w={64} $before={5}><NumberField name="Line radius" disabled /></Field>
          </Field>
          <Field $w={78}><NumberField name="End scale" disabled /></Field>
        </Row>
        <Row>
          <HopsLabel>Line Hops:</HopsLabel>
          <Field $w={185}><Popup name="Line Hops" disabled /></Field>
        </Row>
      </Section>
      <Section $closed><Heading title="Image" /></Section>
      <Section>
        <Heading title="Font" open />
        <Row $between>
          <Field $w={185}><Popup name="Font family" value="Avenir Next" down /></Field>
          <Field $w={88}>
            <svg width="19" height="20" viewBox="0 0 19 20" fill="none" stroke="#6a6a6c" aria-hidden="true">
              <path d="M0 1.500h7M3.500 1.500v17M0 18.500h7" strokeWidth="1.400" />
              <path d="M7 17 14 4" strokeWidth="1.200" />
              <path d="m14 3 2 14.500" strokeWidth="2.600" />
              <path d="M9.500 12.500H15M5 17.500h4M13 17.500h6" strokeWidth="1.300" />
            </svg>
            <Field $w={64} $before={5}><NumberField name="Font size" value="24" /></Field>
          </Field>
        </Row>
        <Row $between>
          <Field $w={185}><Popup name="Typeface" value="Medium" /></Field>
          <Field $w={90}><Well name="Text color" color="#ffffff" /></Field>
        </Row>
      </Section>
    </InspectorBody>
  </Inspector>
);

const BottomBar = () => (
  <Footer>
    <FooterCell>
      <SearchBox>
        <Icon w={14} h={14} sw={1.6}><circle cx="6" cy="6" r="4.500" /><path d="m9 9 4 4" /></Icon>
        <SearchInput type="search" placeholder="Search" aria-label="Search" />
      </SearchBox>
      <GearButton aria-label="Options">
        <Icon w={12} h={12}><circle cx="6" cy="6" r="3.500" strokeWidth="3" /><circle cx="6" cy="6" r="5.300" strokeWidth="1.200" strokeDasharray="2 2.160" /></Icon>
        <Icon w={10} h={8} sw={1.8}><path d="m1.500 2 3.500 3.500L8.500 2" /></Icon>
      </GearButton>
    </FooterCell>
    <FooterCell>
      <DragHandle />
      <StatusText>2 of 49 objects selected</StatusText>
      <ZoomField>
        <ZoomSelect aria-label="Zoom"><option>67%</option></ZoomSelect>
        <UpDown />
      </ZoomField>
    </FooterCell>
    <FooterCell>
      <StyleTray $w={27} $before={6} />
      <StyleTray $w={147} $before={7}>
        <svg width="120" height="18" viewBox="0 0 120 18" fill="none" aria-hidden="true">
          <path d="M0 1h16v16H0z" fill="#88da68" />
          <path d="M18 9h20" stroke="#c39a4c" strokeWidth="2" />
          <path d="M42 2h13v14H42z" fill="#cfe3f0" />
          <path d="M46 11h10v5H46z" fill="#8f9a9f" />
          <path d="M41 17 57 1" stroke="#ee5950" strokeWidth="1.800" />
          <path d="M65 4h11v11H65z" fill="#5e5e60" />
          <path d="M62 17 78 1" stroke="#ee5950" strokeWidth="1.800" />
          <path d="M82 2h14v14H82z" stroke="#6c6c6e" strokeWidth="2" />
          <path d="M101 5h7M104.500 5v8" stroke="#6c6c6e" strokeWidth="2" />
          <path d="M109.500 4.500h8v9h-8z" stroke="#cf9ad6" fill="#f3dcf5" />
          <path d="M109 9h9" stroke="#d974dc" strokeWidth="1.500" />
        </svg>
      </StyleTray>
    </FooterCell>
  </Footer>
);

export default function App() {
  return (
    <>
      <GlobalStyle />
      <Shell>
        <TopBar />
        <Workspace>
          <LeftPanel />
          <Diagram />
          <RightPanel />
        </Workspace>
        <BottomBar />
      </Shell>
    </>
  );
}
